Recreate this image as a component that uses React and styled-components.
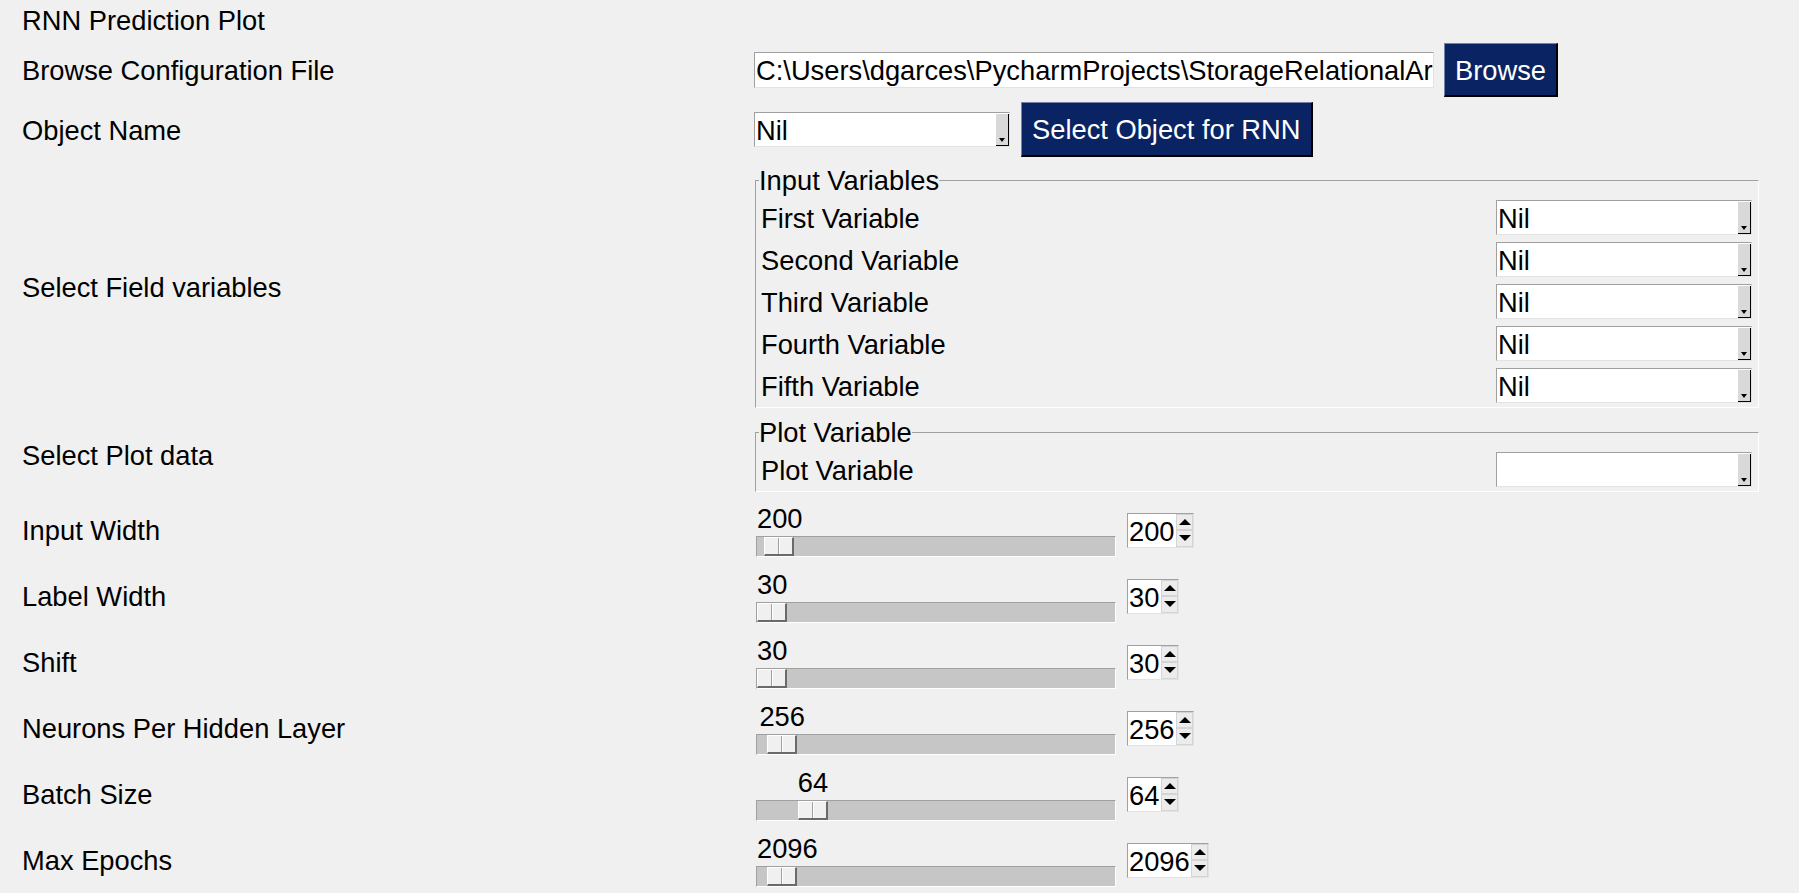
import React from 'react'
import styled, { createGlobalStyle } from 'styled-components'

const GlobalStyle = createGlobalStyle`
  * { box-sizing: border-box; }
  html, body {
    margin: 0;
    padding: 0;
    background: #f0f0f0;
  }
  body {
    font-family: "Liberation Sans", Arial, sans-serif;
    font-size: 27.3px;
    color: #000;
    overflow: hidden;
  }
`

const DIGIT = 15.2

const fieldVars = ['First Variable', 'Second Variable', 'Third Variable', 'Fourth Variable', 'Fifth Variable']

const sliders = [
  { label: 'Input Width', value: 200, from: 1, to: 10000 },
  { label: 'Label Width', value: 30, from: 29, to: 10000 },
  { label: 'Shift', value: 30, from: 29, to: 10000 },
  { label: 'Neurons Per Hidden Layer', value: 256, from: 0, to: 8192 },
  { label: 'Batch Size', value: 64, from: 0, to: 512 },
  { label: 'Max Epochs', value: 2096, from: 0, to: 65536 },
]

const App = () => {
  return (
    <>
      <GlobalStyle />
      <Window>
        <Row $h={39}>
          <Label>RNN Prediction Plot</Label>
        </Row>

        <Row $h={54} $top={4}>
          <Label>Browse Configuration File</Label>
          <Controls $gap={10}>
            <PathEntry readOnly value="C:\Users\dgarces\PycharmProjects\StorageRelationalArchitecture\config.json" />
            <NavyButton $h={54}>Browse</NavyButton>
          </Controls>
        </Row>

        <Row $h={55} $top={5}>
          <Label>Object Name</Label>
          <Controls $gap={11}>
            <Combo value="Nil" />
            <NavyButton $h={55}>Select Object for RNN</NavyButton>
          </Controls>
        </Row>

        <Row $top={8}>
          <Label>Select Field variables</Label>
          <Frame>
            <FrameTitle>Input Variables</FrameTitle>
            <FrameBody>
              {fieldVars.map((v) => (
                <VarRow key={v}>
                  <VarName>{v}</VarName>
                  <Combo value="Nil" />
                </VarRow>
              ))}
            </FrameBody>
          </Frame>
        </Row>

        <Row $top={9}>
          <Label>Select Plot data</Label>
          <Frame>
            <FrameTitle>Plot Variable</FrameTitle>
            <FrameBody>
              <VarRow>
                <VarName>Plot Variable</VarName>
                <Combo value="" />
              </VarRow>
            </FrameBody>
          </Frame>
        </Row>

        <Sliders>
          {sliders.map((s) => (
            <SliderRow key={s.label} {...s} />
          ))}
        </Sliders>
      </Window>
    </>
  )
}

const Combo = ({ value }) => (
  <ComboBox>
    <ComboText>{value}</ComboText>
    <ComboArrow />
  </ComboBox>
)

const SliderRow = ({ label, value, from, to }) => {
  const travel = 328
  const pos = ((value - from) / (to - from)) * travel
  const center = 1 + pos + 15
  const textW = String(value).length * DIGIT
  const left = Math.max(1, center - textW / 2)
  return (
    <Row $h={66}>
      <Label>{label}</Label>
      <Controls $gap={11}>
        <Scale>
          <ScaleValue style={{ paddingLeft: left }}>{value}</ScaleValue>
          <Trough>
            <Handle style={{ marginLeft: pos }} />
          </Trough>
        </Scale>
        <Spin>
          <SpinValue $chars={String(value).length}>{value}</SpinValue>
          <SpinButtons>
            <SpinBtn $up />
            <SpinBtn />
          </SpinButtons>
        </Spin>
      </Controls>
    </Row>
  )
}

export default App

const Window = styled.div`
  width: 1799px;
  height: 893px;
  padding-left: 22px;
  display: flex;
  flex-direction: column;
  background: #f0f0f0;
`

const Row = styled.div`
  display: grid;
  grid-template-columns: 732px 1fr;
  align-items: center;
  flex-shrink: 0;
  ${(p) => (p.$h ? `height: ${p.$h}px;` : '')}
  margin-top: ${(p) => p.$top || 0}px;
`

const Label = styled.div`
  padding-top: 2px;
  line-height: 28px;
  white-space: nowrap;
`

const Controls = styled.div`
  display: flex;
  align-items: center;
  gap: ${(p) => p.$gap}px;
`

const PathEntry = styled.input`
  width: 680px;
  height: 36px;
  padding: 2px 0 0 1px;
  font: inherit;
  color: #000;
  background: #fff;
  border: 1px solid;
  border-color: #a0a0a0 #e3e3e3 #e3e3e3 #a0a0a0;
  outline: none;
`

const NavyButton = styled.button`
  height: ${(p) => p.$h}px;
  padding: 2px 10px 0;
  font: inherit;
  color: #fff;
  background: #0a2463;
  border-style: solid;
  border-width: 1px 2px 2px 1px;
  border-color: #7484a8 #000 #000 #7484a8;
  white-space: nowrap;
  cursor: pointer;
`

const ComboBox = styled.div`
  width: 256px;
  height: 35px;
  display: flex;
  background: #fff;
  border: 1px solid;
  border-color: #a0a0a0 #e3e3e3 #e3e3e3 #a0a0a0;
`

const ComboText = styled.span`
  flex: 1;
  padding: 2px 0 0 1px;
  line-height: 31px;
  white-space: nowrap;
`

const ComboArrow = styled.span`
  width: 13px;
  margin-top: 1px;
  background: #d9d9d9;
  border-right: 1px solid #000;
  border-bottom: 1px solid #000;
  display: flex;
  align-items: flex-end;
  justify-content: center;
  padding-bottom: 3px;
  &::after {
    content: '';
    border-left: 3px solid transparent;
    border-right: 3px solid transparent;
    border-top: 4px solid #000;
  }
`

const Frame = styled.fieldset`
  width: 1004px;
  margin: 0 0 0 1px;
  padding: 5px 6px 4px 5px;
  border: 1px solid;
  border-color: #a0a0a0 #fff #fff #a0a0a0;
  min-width: 0;
`

const FrameTitle = styled.legend`
  padding: 2px 0 0;
  margin-left: -2px;
  line-height: 28px;
  background: #f0f0f0;
`

const FrameBody = styled.div`
  display: flex;
  flex-direction: column;
  gap: 7px;
`

const VarRow = styled.div`
  display: flex;
  align-items: center;
  justify-content: space-between;
  height: 35px;
  white-space: nowrap;
`

const VarName = styled.span`
  padding-top: 2px;
`

const Sliders = styled.div`
  display: flex;
  flex-direction: column;
  margin-top: 5px;
`

const Scale = styled.div`
  width: 360px;
  margin-left: 2px;
  display: flex;
  flex-direction: column;
  gap: 3px;
`

const ScaleValue = styled.div`
  height: 30px;
  padding-top: 2px;
  line-height: 28px;
  white-space: nowrap;
`

const Trough = styled.div`
  height: 21px;
  display: flex;
  background: #c6c6c6;
  border: 1px solid;
  border-color: #a0a0a0 #fff #fff #a0a0a0;
`

const Handle = styled.div`
  width: 30px;
  height: 19px;
  border-style: solid;
  border-width: 1px 2px 2px 1px;
  border-color: #fff #6a6a6a #6a6a6a #fff;
  background:
    linear-gradient(
      to right,
      transparent 13px,
      #a0a0a0 13px,
      #a0a0a0 14px,
      #fff 14px,
      #fff 15px,
      transparent 15px
    ),
    #f0f0f0;
`

const Spin = styled.div`
  height: 35px;
  display: flex;
  background: #fff;
  border: 1px solid;
  border-color: #a0a0a0 #e3e3e3 #e3e3e3 #a0a0a0;
`

const SpinValue = styled.span`
  width: ${(p) => Math.round(p.$chars * 15 + 3)}px;
  padding: 2px 0 0 1px;
  line-height: 31px;
  white-space: nowrap;
  overflow: hidden;
`

const SpinButtons = styled.div`
  width: 17px;
  display: flex;
  flex-direction: column;
`

const SpinBtn = styled.span`
  flex: 1;
  display: flex;
  align-items: center;
  justify-content: center;
  background: #ececec;
  border: 1px solid #d4d4d4;
  &::after {
    content: '';
    border-left: 6px solid transparent;
    border-right: 6px solid transparent;
    ${(p) => (p.$up ? 'border-bottom: 6px solid #000;' : 'border-top: 6px solid #000;')}
  }
`
